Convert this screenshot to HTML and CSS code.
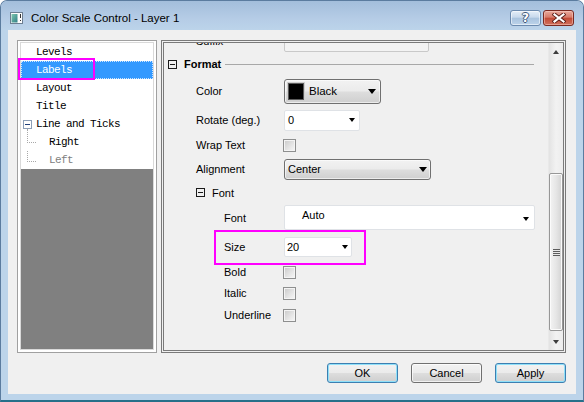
FILE: index.html
```html
<!DOCTYPE html>
<html>
<head>
<meta charset="utf-8">
<link rel="stylesheet" href="styles.css">
</head>
<body>
<div class="window">
  <div class="titlebar">
    <svg class="app-icon" width="13" height="12" viewBox="0 0 13 12">
      <defs>
        <linearGradient id="ig" x1="0" y1="0" x2="1" y2="1">
          <stop offset="0" stop-color="#7fc7b0"/>
          <stop offset="1" stop-color="#2f7f86"/>
        </linearGradient>
      </defs>
      <rect x="0.5" y="0.5" width="12" height="11" fill="#fdfdfd" stroke="#6d7f92"/>
      <rect x="1.5" y="2" width="6" height="8.5" fill="url(#ig)"/>
      <rect x="10" y="2" width="1" height="4" fill="#333"/>
      <rect x="10" y="8" width="1" height="1" fill="#333"/>
    </svg>
    <span class="title">Color Scale Control - Layer 1</span>
    <div class="caption-btns">
      <div class="cbtn help"><span class="qmark">?</span></div>
      <div class="cbtn close">
        <svg width="14" height="10" viewBox="0 0 14 10">
          <path d="M2.5 1.5 L11.5 8.5 M11.5 1.5 L2.5 8.5" stroke="#5a1d17" stroke-width="4" stroke-linecap="square"/>
          <path d="M2.5 1.5 L11.5 8.5 M11.5 1.5 L2.5 8.5" stroke="#ffffff" stroke-width="2.2" stroke-linecap="square"/>
        </svg>
      </div>
    </div>
  </div>

  <div class="client">
    <div class="main">
      <div class="tree">
        <div class="tree-inner">
          <ul class="tree-list">
            <li class="node">Levels</li>
            <li class="node sel">Labels</li>
            <li class="node">Layout</li>
            <li class="node">Title</li>
            <li class="node parent">
              <svg class="exp" width="9" height="9" viewBox="0 0 9 9">
                <rect x="0.5" y="0.5" width="8" height="8" fill="#fff" stroke="#8c9fb8"/>
                <rect x="2" y="4" width="5" height="1" fill="#1f3f7a"/>
              </svg>
              <span>Line and Ticks</span>
            </li>
            <li class="node child">Right</li>
            <li class="node child dim">Left</li>
          </ul>
        </div>
        <div class="annot annot-labels"></div>
      </div>

      <div class="panel">
        <div class="pscroll">
          <div class="props">
            <div class="row r-suffix">
              <span class="lbl">Suffix</span>
              <div class="field"></div>
            </div>

            <div class="ghead r-format">
              <svg class="gbox" width="9" height="9" viewBox="0 0 9 9">
                <rect x="0.5" y="0.5" width="8" height="8" fill="none" stroke="#1a1a1a"/>
                <rect x="2" y="4" width="5" height="1" fill="#1a1a1a"/>
              </svg>
              <span class="gtitle bold">Format</span>
              <span class="gline"></span>
            </div>

            <div class="row r-color">
              <span class="lbl">Color</span>
              <div class="combo btn c-color">
                <span class="swatch"></span>
                <span class="ctext">Black</span>
                <span class="arrow"></span>
              </div>
            </div>

            <div class="row r-rotate">
              <span class="lbl">Rotate (deg.)</span>
              <div class="combo edit c-rotate">
                <span class="ctext">0</span>
                <span class="arrow sm"></span>
              </div>
            </div>

            <div class="row r-wrap">
              <span class="lbl">Wrap Text</span>
              <span class="check"></span>
            </div>

            <div class="row r-align">
              <span class="lbl">Alignment</span>
              <div class="combo btn c-align">
                <span class="ctext">Center</span>
                <span class="arrow"></span>
              </div>
            </div>

            <div class="ghead sub r-fontgrp">
              <svg class="gbox" width="9" height="9" viewBox="0 0 9 9">
                <rect x="0.5" y="0.5" width="8" height="8" fill="none" stroke="#1a1a1a"/>
                <rect x="2" y="4" width="5" height="1" fill="#1a1a1a"/>
              </svg>
              <span class="gtitle">Font</span>
            </div>

            <div class="row r-font">
              <span class="lbl l2">Font</span>
              <div class="combo edit c-font">
                <span class="ctext">Auto</span>
                <span class="arrow sm"></span>
              </div>
            </div>

            <div class="row r-size">
              <span class="lbl l2">Size</span>
              <div class="combo edit c-size">
                <span class="ctext">20</span>
                <span class="arrow sm"></span>
              </div>
              <div class="annot annot-size"></div>
            </div>

            <div class="row r-bold">
              <span class="lbl l2">Bold</span>
              <span class="check"></span>
            </div>
            <div class="row r-italic">
              <span class="lbl l2">Italic</span>
              <span class="check"></span>
            </div>
            <div class="row r-under">
              <span class="lbl l2">Underline</span>
              <span class="check"></span>
            </div>
          </div>
        </div>

        <div class="scrollbar">
          <div class="sb-btn"><span class="sb-up"></span></div>
          <div class="sb-thumb"><span class="grip"></span></div>
          <div class="sb-btn sb-bottom"><span class="sb-down"></span></div>
        </div>
      </div>
    </div>

    <div class="actions">
      <button class="pbtn def">OK</button>
      <button class="pbtn">Cancel</button>
      <button class="pbtn def">Apply</button>
    </div>
  </div>
</div>
</body>
</html>
```

FILE: styles.css
```css
* { box-sizing: border-box; margin: 0; padding: 0; }
html, body { width: 584px; height: 402px; overflow: hidden; background: #ffffff; }
body { font-family: "Liberation Sans", Arial, sans-serif; font-size: 11px; color: #000; }

.window {
  width: 584px; height: 402px;
  border: 1px solid #5b7c9f;
  border-bottom: 2px solid #26708a;
  border-radius: 7px 7px 0 0;
  background: #bcd4ea;
  display: flex; flex-direction: column;
  padding: 0 7px 6px;
}

/* title bar */
.titlebar {
  height: 29px; flex: none;
  margin: 0 -7px;
  padding: 0 9px;
  display: flex; align-items: flex-start;
  background: linear-gradient(#a3bedb, #b5cce6 60%, #bcd4ea);
  border-radius: 6px 6px 0 0;
}
.app-icon { margin-top: 11px; flex: none; }
.title {
  margin-left: 8px; margin-top: 10px;
  font-size: 11.5px; line-height: 14px; color: #000;
}
.caption-btns { margin-left: auto; margin-top: 9px; display: flex; gap: 2px; }
.cbtn {
  width: 31px; height: 16px;
  border-radius: 3px;
  display: flex; align-items: center; justify-content: center;
}
.cbtn.help {
  border: 1px solid #6b8aae;
  background: linear-gradient(#e4eef8, #c8d9ec 45%, #a9c3de 50%, #bcd3ea);
  box-shadow: inset 0 0 0 1px rgba(255,255,255,.55);
}
.qmark {
  font-family: "DejaVu Sans", sans-serif; font-weight: bold; font-size: 12px; line-height: 12px;
  color: #fff;
  text-shadow: 1px 0 0 #3d5a7a, -1px 0 0 #3d5a7a, 0 1px 0 #3d5a7a, 0 -1px 0 #3d5a7a;
}
.cbtn.close {
  border: 1px solid #7a2a22;
  background: linear-gradient(#e9a99c, #d77b6a 45%, #c24a36 50%, #d0705c);
  box-shadow: inset 0 0 0 1px rgba(255,220,210,.45);
}

/* client */
.client {
  flex: 1;
  background: #f0f0f0;
  padding: 10px 10px 11px 9px;
  display: flex; flex-direction: column;
}
.main { display: flex; gap: 4px; height: 313px; flex: none; }

/* tree */
.tree {
  width: 140px; height: 313px; position: relative;
  border: 1px solid #a0a0a0;
  padding: 1px 2px 2px;
  background: #fff;
}
.tree-inner {
  height: 100%;
  border: 1px solid #d9d9d9;
  background: #808080;
  display: flex; flex-direction: column;
}
.tree-list {
  list-style: none;
  background: #fff;
  font-family: "Liberation Mono", "DejaVu Sans Mono", monospace;
  font-size: 11px; letter-spacing: -0.6px;
}
.node { height: 18px; line-height: 18px; padding-left: 15px; color: #000; position: relative; white-space: pre; }
.node.sel { background: #3399ff; color: #fff; outline: 1px dotted #cfe6ff; outline-offset: -1px; }
.node.parent { padding-left: 2px; display: flex; align-items: center; }
.node.parent .exp { margin-right: 4px; flex: none; }
.node.child { padding-left: 28px; }
.node.child::before {
  content: ""; position: absolute;
  left: 6px; top: -4px; width: 8px; height: 13px;
  border-left: 1px dotted #a8a8a8; border-bottom: 1px dotted #a8a8a8;
}
.node.dim { color: #808080; }
.node.dim::before { top: 0; height: 10px; }

.annot { position: absolute; border: 2px solid #ff00ff; pointer-events: none; }
.annot-labels { left: 0; top: 17px; width: 77px; height: 22px; }

/* property panel */
.panel {
  width: 405px; height: 313px;
  border: 3px double #7a7a7a;
  background: #f0f0f0;
  display: flex;
}
.pscroll { flex: 1; overflow: hidden; position: relative; }
.props { margin-top: -13px; }

.row { display: flex; align-items: center; position: relative; }
.lbl { width: 120px; padding-left: 32px; flex: none; white-space: nowrap; }
.lbl.l2 { padding-left: 60px; }

.r-suffix { height: 22px; }
.r-format { height: 24px; }
.r-color { height: 30px; }
.r-rotate { height: 28px; }
.r-wrap { height: 22px; }
.r-align { height: 26px; }
.r-fontgrp { height: 21px; }
.r-font { height: 29px; }
.r-size { height: 30px; }
.r-bold { height: 20px; }
.r-italic { height: 22px; }
.r-under { height: 22px; }

.field {
  width: 145px; height: 22px;
  border: 1px solid #c9c9c9; border-radius: 2px;
  background: #f3f3f3;
}

.ghead { display: flex; align-items: center; padding-left: 4px; }
.ghead.sub { padding-left: 32px; }
.gbox { flex: none; }
.gtitle { margin-left: 7px; }
.bold { font-weight: bold; }
.gline { flex: 1; height: 1px; background: #a8a8a8; margin: 0 14px 0 4px; }

.combo {
  display: flex; align-items: center;
  flex: none;
}
.combo.btn {
  border: 1px solid #707070; border-radius: 3px;
  background: linear-gradient(#f2f2f2, #ebebeb 48%, #dddddd 52%, #cfcfcf);
  box-shadow: inset 0 0 0 1px rgba(255,255,255,.6);
}
.combo.edit {
  border: 1px solid #dfe2e6; border-radius: 2px;
  background: #fff;
}
.ctext { white-space: nowrap; }
.arrow {
  margin-left: auto;
  width: 0; height: 0;
  border-left: 4.5px solid transparent; border-right: 4.5px solid transparent;
  border-top: 5px solid #000;
}
.arrow.sm { border-left-width: 3.5px; border-right-width: 3.5px; border-top-width: 4px; }

.c-color { width: 97px; height: 25px; padding: 0 4px 0 3px; }
.swatch { width: 16px; height: 17px; background: #000; border: 1px solid #5a5a5a; box-shadow: 0 0 0 1px #cfcfcf; flex: none; }
.c-color .ctext { margin-left: 5px; font-size: 11.5px; }

.c-rotate { width: 76px; height: 21px; padding: 0 4px 0 3px; }
.c-align { width: 147px; height: 21px; padding: 0 3px 0 3px; }
.c-font { width: 251px; height: 25px; padding: 0 5px 0 17px; }
.c-font .ctext { margin-top: -5px; }
.c-font .arrow { margin-top: 3px; }
.c-size { width: 68px; height: 20px; padding: 0 3px 0 2px; }

.check {
  width: 13px; height: 13px; margin-left: -1px; flex: none;
  border: 1px solid #8e8f8f;
  background: linear-gradient(135deg, #c9c9c9, #e6e6e6 60%, #f7f7f7);
  box-shadow: inset 0 0 0 1px #f4f4f4;
}

.annot-size { left: 50px; top: -2px; width: 152px; height: 35px; }

/* scrollbar */
.scrollbar {
  width: 15px; flex: none;
  display: flex; flex-direction: column;
  background: linear-gradient(to right, #e3e3e3, #f2f2f2 50%, #ececec);
  border-left: 1px solid #e9e9e9;
}
.sb-btn { height: 17px; flex: none; display: flex; align-items: center; justify-content: center; }
.sb-bottom { margin-top: auto; }
.sb-up, .sb-down { width: 0; height: 0; border-left: 3.5px solid transparent; border-right: 3.5px solid transparent; }
.sb-up { border-bottom: 4px solid #3d3d3d; }
.sb-down { border-top: 4px solid #3d3d3d; }
.sb-thumb {
  margin-top: 113px; height: 158px; flex: none;
  border: 1px solid #979797; border-radius: 2px;
  background: linear-gradient(to right, #f3f3f3, #e6e6e6 50%, #d3d3d3);
  box-shadow: inset 0 0 0 1px #fbfbfb;
  display: flex; align-items: center; justify-content: center;
}
.grip {
  width: 7px; height: 7px;
  background: repeating-linear-gradient(#5c5c5c 0 1px, #e8e8e8 1px 2px);
}

/* buttons */
.actions { display: flex; justify-content: flex-end; gap: 13px; margin-top: 10px; }
.pbtn {
  width: 71px; height: 20px;
  font-family: "Liberation Sans", Arial, sans-serif; font-size: 11px; color: #000;
  border: 1px solid #707070; border-radius: 3px;
  background: linear-gradient(#f2f2f2, #ebebeb 48%, #dddddd 52%, #cfcfcf);
  box-shadow: inset 0 0 0 1px rgba(255,255,255,.7);
}
.pbtn.def {
  border-color: #3c7fb1;
  box-shadow: inset 0 0 0 1px #8fe0f9;
}
```
